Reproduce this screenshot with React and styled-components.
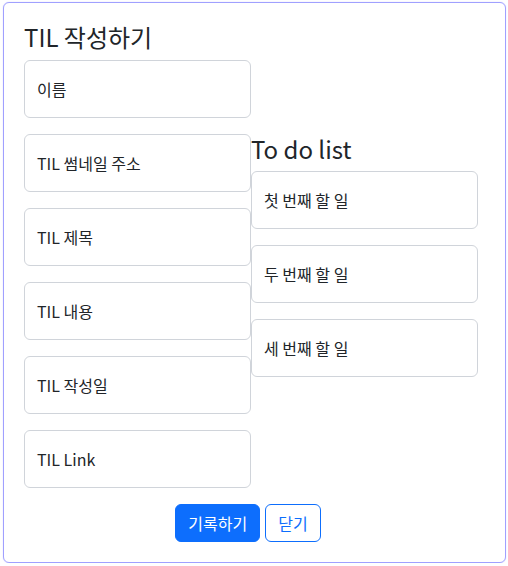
import React from "react";
import styled, { createGlobalStyle } from "styled-components";

const Global = createGlobalStyle`
  * { box-sizing: border-box; }
  body {
    margin: 0;
    background: #fff;
    font-family: "Noto Sans CJK KR", "Noto Sans", sans-serif;
    color: #212529;
  }
`;

const Card = styled.div`
  margin: 2px 0 0 3px;
  width: 503px;
  height: 561px;
  border: 1px solid #a0a0ff;
  border-radius: 6px;
  box-shadow: 0 0 1px #b8b8ff;
  padding: 20px 0 0 20px;
`;

const Inner = styled.div`
  width: 454px;
  display: flex;
  flex-direction: column;
`;

const Title = styled.h2`
  margin: 0 0 8px 0;
  font-size: 24px;
  font-weight: 400;
  line-height: 28.8px;
`;

const Columns = styled.div`
  display: flex;
`;

const Column = styled.div`
  width: 227px;
  display: flex;
  flex-direction: column;
  padding-top: ${(p) => p.$top || 0}px;
`;

const SubTitle = styled.h3`
  margin: 0 0 7px 0;
  font-size: 24px;
  font-weight: 400;
  line-height: 28.8px;
`;

const Field = styled.div`
  height: 58px;
  border: 1px solid #d0d4da;
  border-radius: 6px;
  margin-bottom: 16px;
  display: flex;
  align-items: center;
  padding: 0 12px;
  font-size: 16px;
  line-height: 24px;
  color: #212529;
  background: #fff;
`;

const Buttons = styled.div`
  display: flex;
  justify-content: center;
  gap: 5px;
  margin-right: 6px;
`;

const Button = styled.button`
  height: 38px;
  padding: 0 12px;
  font-family: inherit;
  font-size: 16px;
  border-radius: 6px;
  border: 1px solid #0d6efd;
  background: ${(p) => (p.$primary ? "#0d6efd" : "#fff")};
  color: ${(p) => (p.$primary ? "#fff" : "#0d6efd")};
  cursor: pointer;
`;

const left = ["이름", "TIL 썸네일 주소", "TIL 제목", "TIL 내용", "TIL 작성일", "TIL Link"];
const todos = ["첫 번째 할 일", "두 번째 할 일", "세 번째 할 일"];

export default function App() {
  return (
    <>
      <Global />
      <Card>
        <Inner>
          <Title>TIL 작성하기</Title>
          <Columns>
            <Column>
              {left.map((t) => (
                <Field key={t}>{t}</Field>
              ))}
            </Column>
            <Column $top={75}>
              <SubTitle>To do list</SubTitle>
              {todos.map((t) => (
                <Field key={t}>{t}</Field>
              ))}
            </Column>
          </Columns>
          <Buttons>
            <Button $primary>기록하기</Button>
            <Button>닫기</Button>
          </Buttons>
        </Inner>
      </Card>
    </>
  );
}
